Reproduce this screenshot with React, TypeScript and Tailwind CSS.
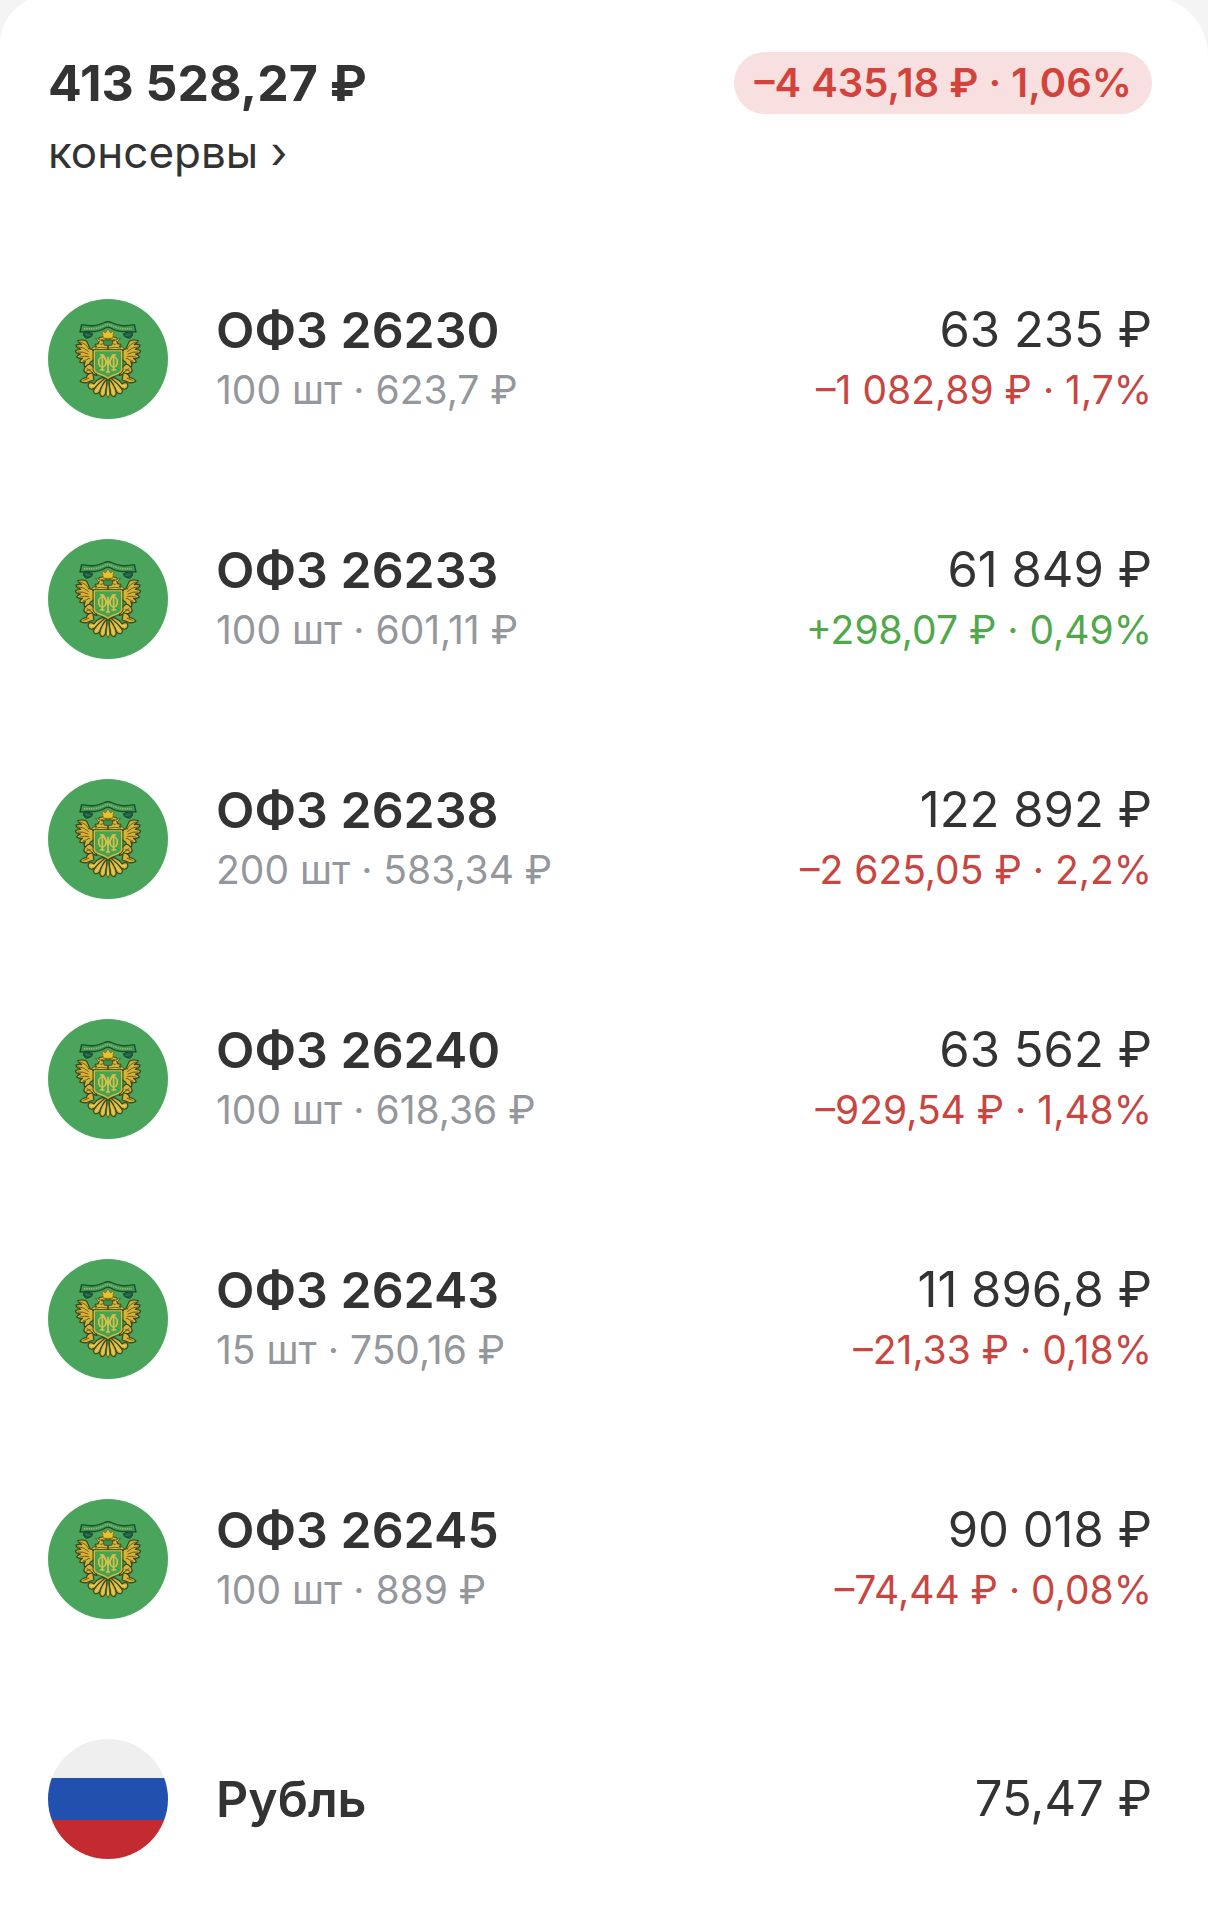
import clsx from "clsx";

type Position = {
  name: string;
  details?: string;
  value: string;
  change?: string;
  up?: boolean;
  currency?: boolean;
};

const positions: Position[] = [
  { name: "ОФЗ 26230", details: "100 шт · 623,7 ₽", value: "63 235 ₽", change: "–1 082,89 ₽ · 1,7%" },
  { name: "ОФЗ 26233", details: "100 шт · 601,11 ₽", value: "61 849 ₽", change: "+298,07 ₽ · 0,49%", up: true },
  { name: "ОФЗ 26238", details: "200 шт · 583,34 ₽", value: "122 892 ₽", change: "–2 625,05 ₽ · 2,2%" },
  { name: "ОФЗ 26240", details: "100 шт · 618,36 ₽", value: "63 562 ₽", change: "–929,54 ₽ · 1,48%" },
  { name: "ОФЗ 26243", details: "15 шт · 750,16 ₽", value: "11 896,8 ₽", change: "–21,33 ₽ · 0,18%" },
  { name: "ОФЗ 26245", details: "100 шт · 889 ₽", value: "90 018 ₽", change: "–74,44 ₽ · 0,08%" },
  { name: "Рубль", value: "75,47 ₽", currency: true },
];

// left half of the eagle, mirrored for the right side
function EmblemHalf() {
  return (
    <g strokeLinejoin="round" strokeLinecap="round">
      {/* wing feathers */}
      <g fill="#dbb138" stroke="#34461b" strokeWidth="3.5">
        <path d="M150 176 L140 154 Q128 147 113 152 Q118 160 125 164 Q114 162 107 166 Q111 175 122 178 Q111 178 106 183 Q110 192 122 192 Q113 195 110 201 Q118 208 128 205 Q119 210 119 216 Q128 221 136 215 Q130 222 134 230 Q147 229 151 217 L163 208 L163 182 Z" />
        <path d="M149 222 Q135 227 131 242 Q138 254 151 251 L170 256 L165 234 Z" />
        <path d="M158 248 Q138 252 140 263 Q130 261 120 273 Q133 283 147 275 L162 270 Z" />
      </g>
      <g fill="none" stroke="#65601e" strokeWidth="3">
        <path d="M121 156 Q138 160 147 178" />
        <path d="M114 170 Q132 171 145 184" />
        <path d="M114 186 Q131 184 144 192" />
        <path d="M120 201 Q135 196 146 200" />
        <path d="M129 214 Q141 208 149 205" />
        <path d="M141 236 L156 246 M139 243 L151 238 M131 271 L147 265" />
      </g>
      {/* head and neck */}
      <path d="M203 181 L157 181 Q152 175 160 171 L170 169 L165 163 L177 161 Q171 150 178 143 Q187 137 197 146 Q204 155 203 166 Z" fill="#dcb73c" stroke="#34461b" strokeWidth="3" />
      <path d="M180 149 L166 145 L176 156 Z" fill="#efc63e" stroke="#34461b" strokeWidth="2" />
      <circle cx="186" cy="151" r="3" fill="#2d4420" />
      <path d="M182 163 Q191 157 195 167 M166 174 Q185 169 201 174" fill="none" stroke="#71641f" strokeWidth="3" />
      {/* tail */}
      <g fill="#ddb83e" stroke="#34461b" strokeWidth="3.5">
        <path d="M188 263 Q170 268 162 282 Q147 272 144 287 Q147 301 162 296 Q174 284 196 266 Z" />
        <path d="M196 265 Q175 279 164 296 Q156 307 167 312 Q181 309 181 297 Q188 281 201 267 Z" />
        <path d="M202 266 Q186 284 181 301 Q176 315 187 320 Q198 316 197 302 Z" />
      </g>
      <path d="M153 288 Q163 291 171 279 M168 304 Q176 299 183 286 M187 312 Q190 300 196 288" fill="none" stroke="#f0cf57" strokeWidth="3" />
      {/* hanging ribbon end */}
      <path d="M131 128 L131 138 Q137 149 147 143 Q157 141 158 131 L144 126 Z" fill="#1e6145" stroke="#1d4432" strokeWidth="3" />
      <path d="M138 134 L150 137" stroke="#408d64" strokeWidth="2" />
    </g>
  );
}

function BondIcon() {
  return (
    <svg viewBox="24 27 360 360" className="size-[120px] shrink-0" aria-hidden="true">
      <circle cx="204" cy="207" r="180" fill="#4aa45c" />
      <EmblemHalf />
      <g transform="translate(408 0) scale(-1 1)">
        <EmblemHalf />
      </g>
      <path d="M204 262 L199 312 L204 324 L209 312 Z" fill="#efc849" stroke="#34461b" strokeWidth="2" />
      {/* crown */}
      <path d="M190 145 L186 121 L196 129 L204 117 L212 129 L222 121 L218 145 Z" fill="#f2bd29" stroke="#765f1b" strokeWidth="2" />
      <path d="M190 150 H218 V160 Q204 175 190 160 Z" fill="#389350" stroke="#4d551d" strokeWidth="3" />
      {/* ribbon with motto */}
      <path d="M125 104 Q144 108 163 107 Q183 103 197 96 Q204 94 211 96 Q225 103 245 107 Q264 108 283 104 L288 126 Q268 123 246 125 Q224 122 212 114 Q204 110 196 114 Q184 122 162 125 Q140 123 120 126 Z" fill="#389b57" stroke="#1f4b2d" strokeWidth="4" strokeLinejoin="round" />
      <path d="M132 116 Q157 118 174 114 Q190 109 199 104 Q204 102 209 104 Q218 109 234 114 Q251 118 276 116" fill="none" stroke="#a5b45a" strokeWidth="5" strokeDasharray="4 3" />
      {/* shield */}
      <path d="M163 182 H245 V239 Q243 248 230 252 Q213 257 204 265 Q195 257 178 252 Q165 248 163 239 Z" fill="#48a351" stroke="#d6b642" strokeWidth="4" />
      <path d="M159 179 H249 V240 Q247 250 233 256 Q214 261 204 270 Q194 261 175 256 Q161 250 159 240 Z" fill="none" stroke="#34521f" strokeWidth="3" />
      {/* monogram */}
      <g fill="none" stroke="#d9c04a" strokeWidth="5">
        <ellipse cx="187" cy="216" rx="11" ry="15" />
        <ellipse cx="221" cy="216" rx="11" ry="15" />
        <path d="M187 194 V240 M221 194 V240 M180 195 H190 L204 226 L218 195 H228 M180 240 H194 M214 240 H228 M204 200 V246 M198 246 H210" />
      </g>
    </svg>
  );
}

function RubleIcon() {
  return (
    <span className="flex size-[120px] shrink-0 flex-col overflow-hidden rounded-full" aria-hidden="true">
      <span className="h-[39px] bg-[#efefef]" />
      <span className="h-[42px] bg-[#2150ae]" />
      <span className="h-[39px] bg-[#c42b31]" />
    </span>
  );
}

function PositionRow({ name, details, value, change, up, currency }: Position) {
  return (
    <li className="flex h-[120px] items-center gap-12">
      {currency ? <RubleIcon /> : <BondIcon />}
      <div className="flex-1">
        <h2 className="text-[50px] leading-[62px] font-semibold">{name}</h2>
        {details && <p className="text-[39px] leading-[58px] text-[#94979b]">{details}</p>}
      </div>
      <div className="text-right whitespace-nowrap">
        <p className="text-[49px] leading-[62px]">{value}</p>
        {change && (
          <p className={clsx("text-[39px] leading-[58px]", up ? "text-[#50a84b]" : "text-[#c8463f]")}>{change}</p>
        )}
      </div>
    </li>
  );
}

export default function App() {
  return (
    <div className="flex min-h-screen flex-col overflow-hidden bg-[#f4f4f4] font-['Inter','Liberation_Sans',sans-serif] text-[#333333]">
      <main className="-mt-1 grow rounded-tl-[48px] rounded-tr-[60px] bg-white px-12 pt-14 pb-12">
        <header className="flex items-start justify-between pr-2">
          <div>
            <h1 className="text-[50px] leading-[62px] font-bold">413 528,27 ₽</h1>
            <a href="#" className="block text-[44px] leading-[76px]">консервы ›</a>
          </div>
          <p className="rounded-full bg-[#f8e0e1] px-5 text-[40px] leading-[62px] font-semibold text-[#d2433c]">
            –4 435,18 ₽ · 1,06%
          </p>
        </header>
        <ul className="mt-[109px] flex flex-col gap-[120px] pr-2">
          {positions.map((p) => (
            <PositionRow key={p.name} {...p} />
          ))}
        </ul>
      </main>
    </div>
  );
}
